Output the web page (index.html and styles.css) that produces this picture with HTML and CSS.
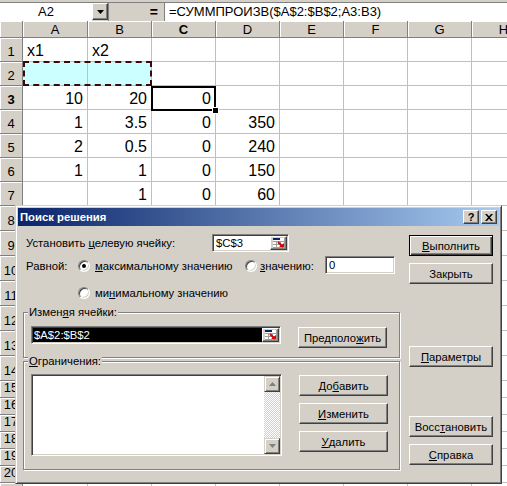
FILE: index.html
```html
<!DOCTYPE html>
<html lang="ru">
<head>
<meta charset="utf-8">
<title>Поиск решения</title>
<link rel="stylesheet" href="styles.css">
</head>
<body>
<div class="topstrip"></div>
<div class="fbar">
  <div class="namebox">A2</div>
  <div class="nbdrop"><svg width="7" height="4" viewBox="0 0 7 4"><path d="M0 0h7L3.5 4z" fill="#000"/></svg></div>
  <div class="eqarea">=</div>
  <div class="formula">=СУММПРОИЗВ($A$2:$B$2;A3:B3)</div>
</div>
<div class="sheet">
  <div class="h"></div><div class="h">A</div><div class="h">B</div><div class="h hs">C</div><div class="h">D</div><div class="h">E</div><div class="h">F</div><div class="h">G</div><div class="h">H</div>

  <div class="h rh">1</div><div class="c">x1</div><div class="c">x2</div><div class="c"></div><div class="c"></div><div class="c"></div><div class="c"></div><div class="c"></div><div class="c"></div>
  <div class="h rh">2</div><div class="c cy"></div><div class="c cy"></div><div class="c"></div><div class="c"></div><div class="c"></div><div class="c"></div><div class="c"></div><div class="c"></div>
  <div class="h rh hs">3</div><div class="c n">10</div><div class="c n">20</div><div class="c n">0</div><div class="c"></div><div class="c"></div><div class="c"></div><div class="c"></div><div class="c"></div>
  <div class="h rh">4</div><div class="c n">1</div><div class="c n">3.5</div><div class="c n">0</div><div class="c n">350</div><div class="c"></div><div class="c"></div><div class="c"></div><div class="c"></div>
  <div class="h rh">5</div><div class="c n">2</div><div class="c n">0.5</div><div class="c n">0</div><div class="c n">240</div><div class="c"></div><div class="c"></div><div class="c"></div><div class="c"></div>
  <div class="h rh">6</div><div class="c n">1</div><div class="c n">1</div><div class="c n">0</div><div class="c n">150</div><div class="c"></div><div class="c"></div><div class="c"></div><div class="c"></div>
  <div class="h rh">7</div><div class="c"></div><div class="c n">1</div><div class="c n">0</div><div class="c n">60</div><div class="c"></div><div class="c"></div><div class="c"></div><div class="c"></div>

  <div class="h rh">8</div><div class="c"></div><div class="c"></div><div class="c"></div><div class="c"></div><div class="c"></div><div class="c"></div><div class="c"></div><div class="c"></div>
  <div class="h rh">9</div><div class="c"></div><div class="c"></div><div class="c"></div><div class="c"></div><div class="c"></div><div class="c"></div><div class="c"></div><div class="c"></div>
  <div class="h rh">10</div><div class="c"></div><div class="c"></div><div class="c"></div><div class="c"></div><div class="c"></div><div class="c"></div><div class="c"></div><div class="c"></div>
  <div class="h rh">11</div><div class="c"></div><div class="c"></div><div class="c"></div><div class="c"></div><div class="c"></div><div class="c"></div><div class="c"></div><div class="c"></div>
  <div class="h rh">12</div><div class="c"></div><div class="c"></div><div class="c"></div><div class="c"></div><div class="c"></div><div class="c"></div><div class="c"></div><div class="c"></div>
  <div class="h rh">13</div><div class="c"></div><div class="c"></div><div class="c"></div><div class="c"></div><div class="c"></div><div class="c"></div><div class="c"></div><div class="c"></div>
  <div class="h rh">14</div><div class="c"></div><div class="c"></div><div class="c"></div><div class="c"></div><div class="c"></div><div class="c"></div><div class="c"></div><div class="c"></div>
  <div class="h rh">15</div><div class="c"></div><div class="c"></div><div class="c"></div><div class="c"></div><div class="c"></div><div class="c"></div><div class="c"></div><div class="c"></div>
  <div class="h rh">16</div><div class="c"></div><div class="c"></div><div class="c"></div><div class="c"></div><div class="c"></div><div class="c"></div><div class="c"></div><div class="c"></div>
  <div class="h rh">17</div><div class="c"></div><div class="c"></div><div class="c"></div><div class="c"></div><div class="c"></div><div class="c"></div><div class="c"></div><div class="c"></div>
  <div class="h rh">18</div><div class="c"></div><div class="c"></div><div class="c"></div><div class="c"></div><div class="c"></div><div class="c"></div><div class="c"></div><div class="c"></div>
  <div class="h rh">19</div><div class="c"></div><div class="c"></div><div class="c"></div><div class="c"></div><div class="c"></div><div class="c"></div><div class="c"></div><div class="c"></div>
  <div class="h rh">20</div><div class="c"></div><div class="c"></div><div class="c"></div><div class="c"></div><div class="c"></div><div class="c"></div><div class="c"></div><div class="c"></div>
  <div class="h rh"></div><div class="c"></div><div class="c"></div><div class="c"></div><div class="c"></div><div class="c"></div><div class="c"></div><div class="c"></div><div class="c"></div>

  <div class="ants"></div>
  <div class="active"></div>
  <div class="handle"></div>
</div>

<div class="dialog">
  <div class="titlebar">
    <span class="title">Поиск решения</span>
    <div class="tbtns">
      <span class="tbtn help">?</span>
      <span class="tbtn close"><svg width="8" height="7" viewBox="0 0 8 7"><path d="M0 0h2l2 2.2L6 0h2L5 3.5 8 7H6L4 4.8 2 7H0l3-3.5z" fill="#000"/></svg></span>
    </div>
  </div>
  <div class="dbody">
    <div class="leftcol">
      <div class="row r1">
        <span class="lbl lbl-target">Установить <u>ц</u>елевую ячейку:</span>
        <div class="field f-target"><span class="ftext">$C$3</span><span class="refbtn"><svg width="12" height="10" viewBox="0 0 12 10"><rect x="0" y="0" width="12" height="10" fill="#fff"/><path d="M0 3.5h12M0 6.5h12M0 9.5h12M3.5 3v7M7.5 3v7M11.5 0v10" stroke="#a0a0a0" stroke-width="1"/><rect x="0" y="0" width="7" height="2" fill="#0a246a"/><path d="M5 4l5 5" stroke="#e00000" stroke-width="2"/><path d="M6 9h5V5z" fill="#e00000"/></svg></span></div>
      </div>
      <div class="row r2">
        <span class="lbl lbl-eq">Равной:</span>
        <span class="radio on"></span>
        <span class="rlabel rl-max"><u>м</u>аксимальному значению</span>
        <span class="radio"></span>
        <span class="rlabel rl-val"><u>з</u>начению:</span>
        <div class="field f-val"><span class="ftext">0</span></div>
      </div>
      <div class="row r3">
        <span class="radio"></span>
        <span class="rlabel">ми<u>н</u>имальному значению</span>
      </div>
      <div class="group g1">
        <span class="gtitle">Измен<u>я</u>я ячейки:</span>
        <div class="grow">
          <div class="field f-change"><span class="ftext seltext">$A$2:$B$2</span><span class="refbtn"><svg width="12" height="10" viewBox="0 0 12 10"><rect x="0" y="0" width="12" height="10" fill="#fff"/><path d="M0 3.5h12M0 6.5h12M0 9.5h12M3.5 3v7M7.5 3v7M11.5 0v10" stroke="#a0a0a0" stroke-width="1"/><rect x="0" y="0" width="7" height="2" fill="#0a246a"/><path d="M5 4l5 5" stroke="#e00000" stroke-width="2"/><path d="M6 9h5V5z" fill="#e00000"/></svg></span></div>
          <button class="btn b-guess">Предполо<u>ж</u>ить</button>
        </div>
      </div>
      <div class="group g2">
        <span class="gtitle"><u>О</u>граничения:</span>
        <div class="grow">
          <div class="listbox">
            <div class="lbarea"></div>
            <div class="vscroll">
              <span class="sbtn"><svg width="7" height="4" viewBox="0 0 7 4"><path d="M3.5 0L7 4H0z" fill="#808080"/></svg></span>
              <span class="strack"></span>
              <span class="sbtn"><svg width="7" height="4" viewBox="0 0 7 4"><path d="M0 0h7L3.5 4z" fill="#808080"/></svg></span>
            </div>
          </div>
          <div class="btncol">
            <button class="btn">До<u>б</u>авить</button>
            <button class="btn"><u>И</u>зменить</button>
            <button class="btn"><u>У</u>далить</button>
          </div>
        </div>
      </div>
    </div>
    <div class="rightcol">
      <button class="btn default"><u>В</u>ыполнить</button>
      <button class="btn b-close">Закрыть</button>
      <button class="btn b-params"><u>П</u>араметры</button>
      <button class="btn b-restore">Восс<u>т</u>ановить</button>
      <button class="btn b-help"><u>С</u>правка</button>
    </div>
  </div>
</div>
</body>
</html>
```

FILE: styles.css
```css
* { box-sizing: border-box; }

body {
  margin: 0;
  width: 507px;
  height: 486px;
  overflow: hidden;
  position: relative;
  background: #fff;
  color: #000;
  font-family: "Liberation Sans", Arial, sans-serif;
}

/* ---------- formula bar ---------- */
.topstrip {
  height: 3px;
  background: #d4d0c8;
  border-bottom: 1px solid #808080;
}

.fbar {
  display: flex;
  height: 18px;
  background: #d4d0c8;
}

.namebox {
  width: 92px;
  background: #fff;
  font-size: 13px;
  line-height: 17px;
  text-align: center;
}

.nbdrop {
  width: 16px;
  height: 17px;
  background: #d4d0c8;
  border: 1px solid;
  border-color: #fff #404040 #404040 #fff;
  box-shadow: inset -1px -1px #808080;
  display: flex;
  align-items: center;
  justify-content: center;
}

.eqarea {
  width: 56px;
  display: flex;
  justify-content: flex-end;
  align-items: center;
  padding-right: 6px;
  font-size: 14px;
  font-weight: bold;
  border-left: 1px solid #808080;
}

.formula {
  flex: 1;
  background: #fff;
  font-size: 13px;
  line-height: 17px;
  padding-left: 4px;
  border-left: 1px solid #808080;
  white-space: nowrap;
}

/* ---------- sheet grid ---------- */
.sheet {
  position: relative;
  display: grid;
  width: 536px;
  grid-template-columns: 23px 65px repeat(7, 64px);
  grid-template-rows: 17px repeat(7, 24px) repeat(7, 25px) repeat(7, 17px);
}

.c {
  border-right: 1px solid #c0c0c0;
  border-bottom: 1px solid #c0c0c0;
  font-size: 16px;
  line-height: 18px;
  padding: 0 4px 1px 4px;
  display: flex;
  align-items: flex-end;
  white-space: nowrap;
  overflow: hidden;
}

.n { justify-content: flex-end; }

.cy { background: #ccffff; }

.h {
  background: #d4d0c8;
  border-right: 1px solid #808080;
  border-bottom: 1px solid #808080;
  box-shadow: inset 1px 1px #fff;
  font-size: 13px;
  display: flex;
  align-items: center;
  justify-content: center;
  overflow: hidden;
  white-space: nowrap;
}

.rh {
  align-items: flex-end;
  padding-bottom: 2px;
}

.hs { font-weight: bold; }

.ants {
  position: absolute;
  left: 23px;
  top: 40px;
  width: 129px;
  height: 25px;
  border: 2px dashed #3a0a0a;
}

.active {
  position: absolute;
  left: 151px;
  top: 65px;
  width: 65px;
  height: 25px;
  border: 2px solid #000;
}

.handle {
  position: absolute;
  left: 213px;
  top: 87px;
  width: 5px;
  height: 5px;
  background: #000;
  outline: 1px solid #fff;
}

/* ---------- dialog ---------- */
.dialog {
  position: absolute;
  left: 15px;
  top: 205px;
  width: 487px;
  height: 279px;
  background: #d4d0c8;
  border: 1px solid;
  border-color: #d4d0c8 #404040 #404040 #d4d0c8;
  box-shadow: inset 1px 1px #fff, inset -1px -1px #808080;
  padding: 2px;
  font-size: 11.3px;
}

.titlebar {
  height: 18px;
  background: linear-gradient(to right, #0a246a, #a6caf0);
  display: flex;
  align-items: center;
  justify-content: space-between;
  padding: 0 2px 0 2px;
}

.title {
  color: #fff;
  font-weight: bold;
  font-size: 11.3px;
}

.tbtns {
  display: flex;
  gap: 2px;
}

.tbtn {
  width: 16px;
  height: 14px;
  background: #d4d0c8;
  border: 1px solid;
  border-color: #fff #404040 #404040 #fff;
  box-shadow: inset -1px -1px #808080;
  display: flex;
  align-items: center;
  justify-content: center;
  font-weight: bold;
  font-size: 11px;
  line-height: 12px;
}

.dbody {
  display: flex;
  gap: 9px;
  padding: 0 6px 0 5px;
}

.leftcol {
  width: 377px;
  flex: none;
  padding-top: 7px;
}

.row {
  display: flex;
  align-items: center;
  height: 20px;
}

.row > * { flex: none; }

.r2 { margin-top: 3px; }
.r3 { margin-top: 7px; padding-left: 55px; }

.lbl { padding-left: 3px; }
.lbl-target { width: 189px; }
.lbl-eq { width: 55px; }

.rlabel { padding-left: 5px; }
.rl-max { width: 155px; }
.rl-val { width: 68px; padding-left: 3px; }

.radio {
  width: 12px;
  height: 12px;
  border-radius: 50%;
  background: #fff;
  border: 1px solid;
  border-color: #808080 #fff #fff #808080;
  box-shadow: inset 1px 1px #404040, inset -1px -1px #d4d0c8;
  display: flex;
  align-items: center;
  justify-content: center;
}

.radio.on::after {
  content: "";
  width: 4px;
  height: 4px;
  border-radius: 50%;
  background: #000;
}

.field {
  height: 18px;
  background: #fff;
  border: 1px solid;
  border-color: #808080 #fff #fff #808080;
  box-shadow: inset 1px 1px #404040, inset -1px -1px #d4d0c8;
  padding: 1px;
  display: flex;
  align-items: stretch;
}

.ftext {
  flex: 1;
  padding-left: 2px;
  line-height: 14px;
  white-space: nowrap;
}

.f-target { width: 77px; }
.f-val { width: 70px; margin-top: -2px; }
.f-change { width: 250px; flex: none; }

.seltext {
  background: #000;
  color: #fff;
  padding-left: 1px;
}

.refbtn {
  width: 17px;
  flex: none;
  background: #d4d0c8;
  border: 1px solid;
  border-color: #fff #404040 #404040 #fff;
  box-shadow: inset -1px -1px #808080;
  display: flex;
  align-items: center;
  justify-content: center;
}

.group {
  border: 1px solid #808080;
  box-shadow: inset 1px 1px #fff, 1px 1px #fff;
}

.g1 {
  margin-top: 9px;
  padding: 0 12px 9px 7px;
}

.g2 {
  margin-top: 3px;
  padding: 0 12px 13px 7px;
}

.gtitle {
  display: block;
  width: max-content;
  margin: -7px 0 0 -3px;
  padding: 0 1px;
  line-height: 13px;
  background: #d4d0c8;
}

.grow {
  display: flex;
  align-items: flex-start;
  gap: 17px;
}

.g1 .grow { margin-top: 7px; }
.g2 .grow { margin-top: 6px; }

.btn {
  font-family: "Liberation Sans", Arial, sans-serif;
  font-size: 11.3px;
  color: #000;
  width: 89px;
  height: 21px;
  flex: none;
  padding: 0;
  margin: 0;
  background: #d4d0c8;
  border: 1px solid;
  border-color: #fff #404040 #404040 #fff;
  box-shadow: inset -1px -1px #808080;
  text-align: center;
  display: flex;
  align-items: center;
  justify-content: center;
}

.b-guess { margin-top: 1px; }

.listbox {
  width: 251px;
  height: 82px;
  flex: none;
  background: #fff;
  border: 1px solid;
  border-color: #808080 #fff #fff #808080;
  box-shadow: inset 1px 1px #404040, inset -1px -1px #d4d0c8;
  padding: 1px;
  display: flex;
}

.lbarea { flex: 1; }

.vscroll {
  width: 16px;
  display: flex;
  flex-direction: column;
}

.sbtn {
  height: 16px;
  background: #d4d0c8;
  border: 1px solid;
  border-color: #d4d0c8 #404040 #404040 #d4d0c8;
  box-shadow: inset 1px 1px #fff, inset -1px -1px #808080;
  display: flex;
  align-items: center;
  justify-content: center;
}

.strack {
  flex: 1;
  background: repeating-conic-gradient(#d4d0c8 0 25%, #fff 0 50%) 0 0 / 2px 2px;
}

.btncol {
  display: flex;
  flex-direction: column;
  gap: 7px;
  margin-top: 1px;
}

.rightcol {
  width: 84px;
  flex: none;
  padding-top: 9px;
  display: flex;
  flex-direction: column;
}

.rightcol .btn { width: 84px; }

.default {
  border: 1px solid #000;
  box-shadow: inset 1px 1px #fff, inset -1px -1px #404040, inset -2px -2px #808080;
}

.b-close { margin-top: 7px; }
.b-params { margin-top: 62px; }
.b-restore { margin-top: 49px; }
.b-help { margin-top: 7px; }
```
